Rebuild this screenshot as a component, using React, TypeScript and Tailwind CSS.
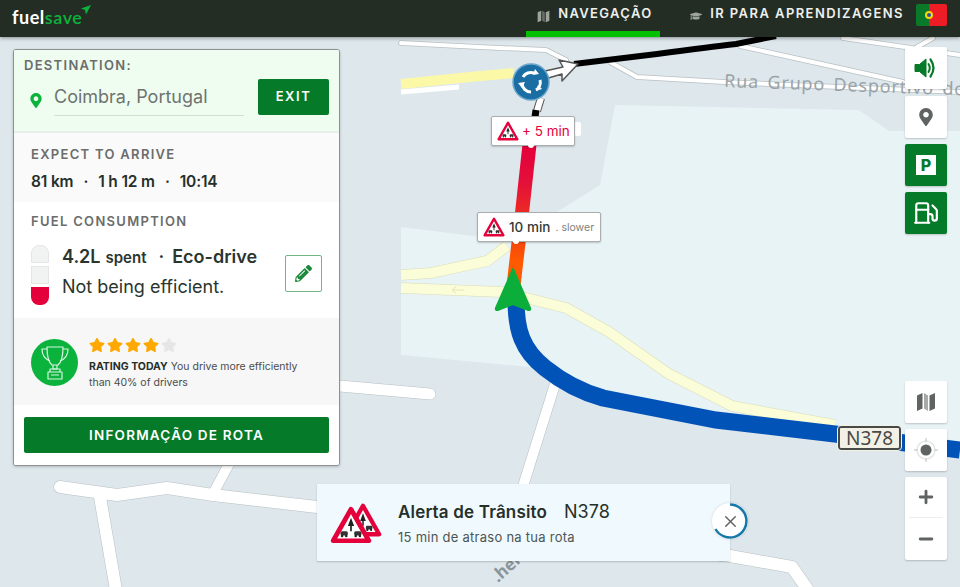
import { FaGraduationCap, FaMapMarkerAlt, FaPencilAlt, FaStar } from "react-icons/fa"
import { Fuel, Minus, Plus, X } from "lucide-react"

function Speaker() {
  return (
    <svg width="24" height="22" viewBox="0 0 24 22" fill="none">
      <path d="M1 7.500h4.500L12 2v18l-6.500-5.500H1z" fill="#057a28" stroke="#057a28" strokeLinejoin="round" />
      <path d="M14.500 7q2.500 4 0 8" stroke="#057a28" strokeWidth="2" strokeLinecap="round" />
      <path d="M16.500 2.500q6 8.500 0 17" stroke="#057a28" strokeWidth="2.200" strokeLinecap="round" />
    </svg>
  )
}

function FoldedMap({ className }: { className?: string }) {
  return (
    <svg className={className} viewBox="0 0 18 20" fill="currentColor">
      <path d="M0 3.500L5.500 1V16.500L0 19Z" />
      <path d="M7 1L11 3.500V19L7 16.500Z" opacity="0.55" />
      <path d="M12.500 3.500L18 1V16.500L12.500 19Z" />
    </svg>
  )
}

function TrophyIcon() {
  return (
    <svg width="30" height="36" viewBox="0 0 30 36" fill="none" stroke="#d6f5df" strokeWidth="1.200" strokeLinejoin="round">
      <path d="M7 2h16c0 8-1 15-5 18h-6c-4-3-5-10-5-18z" />
      <path d="M7 4H2c0 6 3 10 8 12M23 4h5c0 6-3 10-8 12" />
      <path d="M13 20v4h4v-4" />
      <path d="M10 24h10v3H10zM8 27h14v7H8z" />
      <path d="M11 30h8" />
    </svg>
  )
}

function TrafficTriangle({ className }: { className?: string }) {
  return (
    <svg className={className} viewBox="0 0 40 36">
      <path d="M20 3L37 33H3z" fill="#fff" stroke="#e4003a" strokeWidth="4.500" strokeLinejoin="round" />
      <path d="M20 11l3 8h-2.200v5h-1.600v-5h-2.200z" fill="#222" />
      <rect x="10" y="24" width="7" height="4" rx="1.500" fill="#333" />
      <rect x="23" y="24" width="7" height="4" rx="1.500" fill="#333" />
      <circle cx="11.500" cy="28.500" r="1.200" fill="#222" />
      <circle cx="15.500" cy="28.500" r="1.200" fill="#222" />
      <circle cx="24.500" cy="28.500" r="1.200" fill="#222" />
      <circle cx="28.500" cy="28.500" r="1.200" fill="#222" />
    </svg>
  )
}

function MapCanvas() {
  return (
    <svg className="absolute inset-0 h-full w-full" viewBox="0 37 960 550" fill="none">
      <defs>
        <linearGradient id="traffic" gradientUnits="userSpaceOnUse" x1="530" y1="147" x2="513" y2="290">
          <stop offset="0" stopColor="#e4003a" />
          <stop offset="0.25" stopColor="#e4103a" />
          <stop offset="0.6" stopColor="#f03c14" />
          <stop offset="0.8" stopColor="#ff5a00" />
          <stop offset="1" stopColor="#ff5a00" />
        </linearGradient>
      </defs>

      <path
        d="M401 227L505 240L560 210L600 185L615 105L859 110L889 131L960 131V445L835 434L716 420L601 399L546 372L530 367L401 355Z"
        fill="#e8f3f6"
      />

      {/* white roads */}
      <g stroke="#b9c0c2" strokeWidth="5.500" strokeLinecap="round" strokeLinejoin="round">
        <path d="M401 43L479 47L546 50L566 60" />
        <path d="M610 62L637 77L724 82L840 87L960 92" />
        <path d="M740 46L903 82" />
        <path d="M843 38L960 55" />
        <path d="M933 38L917 47" />
        <path d="M340 386L430 394" strokeWidth="12" />
        <path d="M556 381L524 483" strokeWidth="11" />
        <path d="M60 487L117 495L167 488L213 495L317 507L730 556L792 567L808 590" strokeWidth="13" />
        <path d="M230 462L215 490" strokeWidth="11" />
        <path d="M100 497L116 590" strokeWidth="13" />
      </g>
      <g stroke="#fff" strokeWidth="4" strokeLinecap="round" strokeLinejoin="round">
        <path d="M401 43L479 47L546 50L566 60" />
        <path d="M610 62L637 77L724 82L840 87L960 92" />
        <path d="M740 46L903 82" />
        <path d="M843 38L960 55" />
        <path d="M933 38L917 47" />
        <path d="M340 386L430 394" strokeWidth="11" />
        <path d="M556 381L524 483" strokeWidth="10" />
        <path d="M60 487L117 495L167 488L213 495L317 507L730 556L792 567L808 590" strokeWidth="12" />
        <path d="M230 462L215 490" strokeWidth="10" />
        <path d="M100 497L116 590" strokeWidth="12" />
      </g>

      {/* yellow roads */}
      <path d="M401 92L459 87" stroke="#fff" strokeWidth="5" />
      <path d="M401 84L470 77L514 73" stroke="#fbf8a8" strokeWidth="10" />
      <path d="M401 275L431 273L487 261L507 246" stroke="#d9dcb8" strokeWidth="11" />
      <path d="M401 288L502 292L566 308L609 332L669 374L732 406L835 425" stroke="#d9dcb8" strokeWidth="11" />
      <path d="M401 275L431 273L487 261L507 246" stroke="#fbfcd8" strokeWidth="10" />
      <path d="M401 288L502 292L566 308L609 332L669 374L732 406L835 425" stroke="#fbfcd8" strokeWidth="10" />
      <path d="M464 290h-12m4 -3l-4 3l4 3" stroke="#e7e6b8" strokeWidth="1" />

      {/* route */}
      <path d="M516 300C516 330 522 350 545 368C565 384 585 393 603 398L716 420L835 434L960 450" stroke="#0253b8" strokeWidth="17" />
      <path d="M513 290L522 213L530 140" stroke="url(#traffic)" strokeWidth="14" />
      <path d="M574 64L657 54Q710 47 736 44L776 36" stroke="#000" strokeWidth="6" />
      <path d="M541 98L537 111" stroke="#555" strokeWidth="8" />
      <path d="M541 98L537 111" stroke="#fff" strokeWidth="6" />
      <path d="M536 110L535 117" stroke="#000" strokeWidth="7" />
      <path d="M545 71L563 67L559 60L578 64L562 81L562 74L545 79Z" fill="#fff" stroke="#555" strokeWidth="1.500" strokeLinejoin="round" />

      {/* roundabout */}
      <circle cx="531" cy="82" r="18" fill="#1b6ea3" stroke="#6ba6cb" strokeWidth="1.500" />
      <g stroke="#fff" strokeWidth="3" fill="none">
        <path d="M523 77a9 9 0 0 1 11-4" />
        <path d="M540 80a9 9 0 0 1-4 10" />
        <path d="M531 92a9 9 0 0 1-9-9" />
      </g>
      <path d="M535 69l4 5l-6 1zM542 89l-6 2l2-6zM518 83l7-1l-3 6z" fill="#fff" />

      {/* white stub behind first callout */}
      <rect x="572" y="122" width="9" height="14" rx="2" fill="#fff" />

      {/* labels */}
      <text x="724" y="87" transform="rotate(2 724 87)" fill="#9aa3a8" fontSize="18" letterSpacing="0.8" wordSpacing="3" style={{ fontFamily: '"Noto Sans", sans-serif' }}>
        Rua Grupo Desportivo do
      </text>
      <text x="498" y="583" transform="rotate(-42 498 583)" fill="#8c9599" fontSize="17" fontWeight="700" style={{ fontFamily: '"Noto Sans", sans-serif' }}>
        .here
      </text>

      {/* position arrow */}
      <path d="M513 269L530 308Q531 311 527 309.500L513 304L499 309.500Q495 311 496 308Z" fill="#0bae3a" stroke="#0bae3a" strokeWidth="2" strokeLinejoin="round" />
    </svg>
  )
}

function MapButton({ children, green }: { children: React.ReactNode; green?: boolean }) {
  return (
    <button className={`flex h-[42px] w-[42px] items-center justify-center rounded-[2px] shadow-[0_1px_2px_rgba(0,0,0,0.2)] ${green ? "bg-[#057a28]" : "bg-white"}`}>
      {children}
    </button>
  )
}

function RouteCard() {
  return (
    <div className="absolute left-[13px] top-[12px] w-[327px] overflow-hidden rounded-[3px] border border-[#8d9291] bg-white shadow-[0_1px_3px_rgba(0,0,0,0.2)]">
      <div className="h-[83px] border-b-2 border-[#e9eeeb] bg-[#effdf1] px-[10px] pt-[7px]">
        <div className="text-[13px] font-semibold leading-4 tracking-[0.1em] text-[#6b6d6b]">DESTINATION:</div>
        <div className="mt-[6px] flex items-start">
          <FaMapMarkerAlt className="ml-[6px] mt-[14px] h-[15px] w-[12px] shrink-0 text-[#0bb33c]" />
          <div className="ml-[12px] h-[37px] w-[190px] border-b border-[#d6ddd9] pt-[5px] text-[18px] leading-[26px] text-[#6f7370]">Coimbra, Portugal</div>
          <button className="ml-[14px] h-[36px] w-[71px] rounded-[2px] bg-[#057a28] text-[13px] font-semibold tracking-[0.12em] text-white">EXIT</button>
        </div>
      </div>

      <div className="h-[69px] bg-[#fafafa] px-[17px] pt-[13px]">
        <div className="text-[13px] font-semibold leading-4 tracking-[0.1em] text-[#6b6d6b]">EXPECT TO ARRIVE</div>
        <div className="mt-[10px] flex text-[15.5px] font-semibold leading-5 tracking-[-0.01em] text-[#26302a]">
          <span>81 km</span>
          <span className="mx-[10px]">·</span>
          <span>1 h 12 m</span>
          <span className="mx-[10px]">·</span>
          <span>10:14</span>
        </div>
      </div>

      <div className="h-[116px] bg-white px-[17px] pt-[11px]">
        <div className="text-[13px] font-semibold leading-4 tracking-[0.1em] text-[#6b6d6b]">FUEL CONSUMPTION</div>
        <div className="mt-[8px] flex items-start">
          <div className="flex w-[18px] flex-col gap-[3px] pt-[8px]">
            <div className="h-[18px] rounded-t-[8px] border border-[#e4e6e6] bg-[#f1f2f2]" />
            <div className="h-[18px] border border-[#e4e6e6] bg-[#f1f2f2]" />
            <div className="h-[18px] rounded-b-[8px] bg-[#e4003a]" />
          </div>
          <div className="ml-[13px] w-[223px] pt-[6px] text-[#2a352e]">
            <div className="flex h-[30px] items-baseline text-[18px] font-semibold leading-7">
              <span>4.2L</span>
              <span className="ml-[5px] text-[15px]">spent</span>
              <span className="ml-[12px] mr-[8px]">·</span>
              <span>Eco-drive</span>
            </div>
            <div className="text-[18px] leading-7">Not being efficient.</div>
          </div>
          <button className="mt-[18px] flex h-[37px] w-[37px] shrink-0 items-center justify-center rounded-[2px] border border-[#71b585] bg-white">
            <FaPencilAlt className="h-[17px] w-[17px] text-[#1c8a3c]" />
          </button>
        </div>
      </div>

      <div className="flex h-[87px] bg-[#f7f7f7] pl-[17px] pt-[21px]">
        <div className="flex h-[47px] w-[47px] shrink-0 items-center justify-center rounded-full bg-[#0bb33c]">
          <TrophyIcon />
        </div>
        <div className="-mt-[2px] ml-[11px]">
          <div className="flex gap-[2px]">
            <FaStar className="h-[16px] w-[16px] text-[#ffa800]" />
            <FaStar className="h-[16px] w-[16px] text-[#ffa800]" />
            <FaStar className="h-[16px] w-[16px] text-[#ffa800]" />
            <FaStar className="h-[16px] w-[16px] text-[#ffa800]" />
            <FaStar className="h-[16px] w-[16px] text-[#e6e6e6]" />
          </div>
          <p className="mt-[6px] w-[225px] text-[10.5px] leading-4 text-[#4a4d4c]">
            <b className="font-bold text-[#26302a]">RATING TODAY</b> You drive more efficiently than 40% of drivers
          </p>
        </div>
      </div>

      <div className="h-[60px] bg-white px-[10px] pt-[12px]">
        <button className="h-[36px] w-full rounded-[2px] bg-[#057a28] text-[13.5px] font-semibold tracking-[0.09em] text-white">INFORMAÇÃO DE ROTA</button>
      </div>
    </div>
  )
}

export default function App() {
  return (
    <div className="flex h-[587px] w-[960px] flex-col overflow-hidden bg-[#dde7ec] font-['Inter',sans-serif]">
      <header className="relative z-10 flex h-[37px] shrink-0 items-start bg-[#242d24] shadow-[0_1px_4px_rgba(0,0,0,0.4)]">
        <div className="relative ml-[12px] mt-[6px] flex font-['Lato',sans-serif] text-[18px] leading-[22px] tracking-[0.03em]">
          <span className="font-bold text-white">fuel</span>
          <span className="font-semibold text-[#0bb33c]">save</span>
          <svg className="ml-[-1px] mt-[-1px] h-[10px] w-[10px]" viewBox="0 0 10 10">
            <path d="M10 0L0 3.500L4 5L5 9.500Z" fill="#0bb33c" />
          </svg>
        </div>
        <nav className="ml-auto flex h-[37px] items-start">
          <a className="flex h-[37px] w-[134px] items-start border-b-[6px] border-[#00c000] pl-[11px] pt-[5px] text-[13px] font-semibold leading-4 tracking-[0.105em] text-[#eef0ee]">
            <FoldedMap className="mt-[5px] h-[13px] w-[13px] text-[#9ea39e]" />
            <span className="ml-[8px]">NAVEGAÇÃO</span>
          </a>
          <a className="ml-[30px] flex items-start pt-[5px] text-[13px] font-semibold leading-4 tracking-[0.11em] text-[#eef0ee]">
            <FaGraduationCap className="mt-[5px] h-[12px] w-[12px] text-[#9ea39e]" />
            <span className="ml-[8px]">IR PARA APRENDIZAGENS</span>
          </a>
          <div className="relative ml-[12px] mr-[13px] mt-[4px] flex h-[22px] w-[31px] overflow-hidden rounded-[2px]">
            <div className="w-[13px] bg-[#0a7a2a]" />
            <div className="flex-1 bg-[#ee1c25]" />
            <div className="absolute left-[9px] top-[7px] h-[8px] w-[8px] rounded-full border-2 border-[#f5d90a] bg-[#2b4fa8]" />
          </div>
        </nav>
      </header>

      <main className="relative flex-1">
        <MapCanvas />
        <RouteCard />

        <div className="absolute left-[491px] top-[79px] flex h-[30px] w-[84px] items-center rounded-[2px] border border-[#a9adad] bg-white pl-[5px] shadow-[0_1px_2px_rgba(0,0,0,0.2)]">
          <TrafficTriangle className="h-[20px] w-[22px]" />
          <span className="ml-[3px] text-[13.5px] text-[#e4003a]">+ 5 min</span>
          <div className="absolute bottom-[-3px] left-[36px] h-[3px] w-[6px] rounded-b-[3px] bg-white" />
        </div>
        <div className="absolute left-[477px] top-[175px] flex h-[30px] w-[124px] items-center rounded-[2px] border border-[#a9adad] bg-white pl-[5px] shadow-[0_1px_2px_rgba(0,0,0,0.2)]">
          <TrafficTriangle className="h-[20px] w-[22px]" />
          <span className="ml-[4px] text-[13.5px] font-medium text-[#333a36]">10 min</span>
          <span className="ml-[5px] mt-[1px] text-[10.5px] text-[#7c8280]">. slower</span>
          <div className="absolute bottom-[-3px] left-[35px] h-[3px] w-[6px] rounded-b-[3px] bg-white" />
        </div>

        <div className="absolute left-[838px] top-[389px] flex h-[24px] w-[63px] items-center justify-center rounded-[3px] border-2 border-[#474a46] bg-[#f3f1e6] font-['Noto_Sans',sans-serif] text-[19px] leading-none text-[#474a46] outline outline-1 outline-[#f3f1e6]">
          N378
        </div>

        <div className="absolute right-[13px] top-[10px] flex h-[513px] flex-col">
          <div className="flex flex-col gap-[7px]">
            <MapButton><Speaker /></MapButton>
            <MapButton><FaMapMarkerAlt className="h-[18px] w-[14px] text-[#5f6361]" /></MapButton>
          </div>
          <div className="mt-[6px] flex flex-col gap-[6px]">
            <MapButton green>
              <span className="flex h-[20px] w-[20px] items-center justify-center bg-white text-[16px] font-extrabold leading-none text-[#057a28]">P</span>
            </MapButton>
            <MapButton green><Fuel className="h-[26px] w-[26px] text-white" strokeWidth={2} /></MapButton>
          </div>
          <div className="mt-auto flex flex-col gap-[6px]">
            <MapButton><FoldedMap className="h-[20px] w-[18px] text-[#5f6361]" /></MapButton>
            <MapButton>
              <svg width="24" height="24" viewBox="0 0 24 24" fill="none">
                <circle cx="12" cy="12" r="5.500" fill="#5f6361" />
                <circle cx="12" cy="12" r="9" stroke="#e4e7e8" strokeWidth="1.500" />
                <path d="M12 0v4M12 20v4M0 12h4M20 12h4" stroke="#cfd3d4" strokeWidth="1.500" />
              </svg>
            </MapButton>
            <div className="flex h-[83px] w-[42px] flex-col items-center rounded-[2px] bg-white shadow-[0_1px_2px_rgba(0,0,0,0.2)]">
              <div className="flex h-[41px] w-[34px] items-center justify-center border-b border-[#eceeee]">
                <Plus className="h-[20px] w-[20px] text-[#5f6361]" strokeWidth={3.4} />
              </div>
              <div className="flex h-[41px] items-center justify-center">
                <Minus className="h-[20px] w-[20px] text-[#5f6361]" strokeWidth={3.4} />
              </div>
            </div>
          </div>
        </div>

        <div className="absolute left-[317px] top-[447px] flex h-[77px] w-[413px] items-center rounded-[1px] bg-[#f0f9fe] pl-[13px] shadow-[0_1px_2px_rgba(0,0,0,0.2)]">
          <div className="relative h-[42px] w-[52px]">
            <TrafficTriangle className="absolute left-[14px] top-0 h-[36px] w-[38px]" />
            <TrafficTriangle className="absolute left-0 top-[4px] h-[38px] w-[42px]" />
          </div>
          <div className="ml-[16px]">
            <div className="flex items-baseline text-[17px] leading-6 text-[#26302a]">
              <b className="font-semibold tracking-[0.01em]">Alerta de Trânsito</b>
              <span className="ml-[17px] text-[18px]">N378</span>
            </div>
            <div className="mt-[5px] text-[13px] leading-4 tracking-[0.02em] text-[#4c5652]">15 min de atraso na tua rota</div>
          </div>
          <div className="absolute left-[395px] top-[19px] flex h-[36px] w-[36px] items-center justify-center rounded-full bg-white shadow-[0_0_3px_rgba(0,0,0,0.15)]">
            <svg className="absolute inset-0" viewBox="0 0 36 36" fill="none">
              <path d="M18 1.500A16.500 16.500 0 1 1 3.500 26" stroke="#1678a8" strokeWidth="2.500" />
            </svg>
            <X className="h-[19px] w-[19px] text-[#5f6361]" strokeWidth={1.8} />
          </div>
        </div>
      </main>
    </div>
  )
}
